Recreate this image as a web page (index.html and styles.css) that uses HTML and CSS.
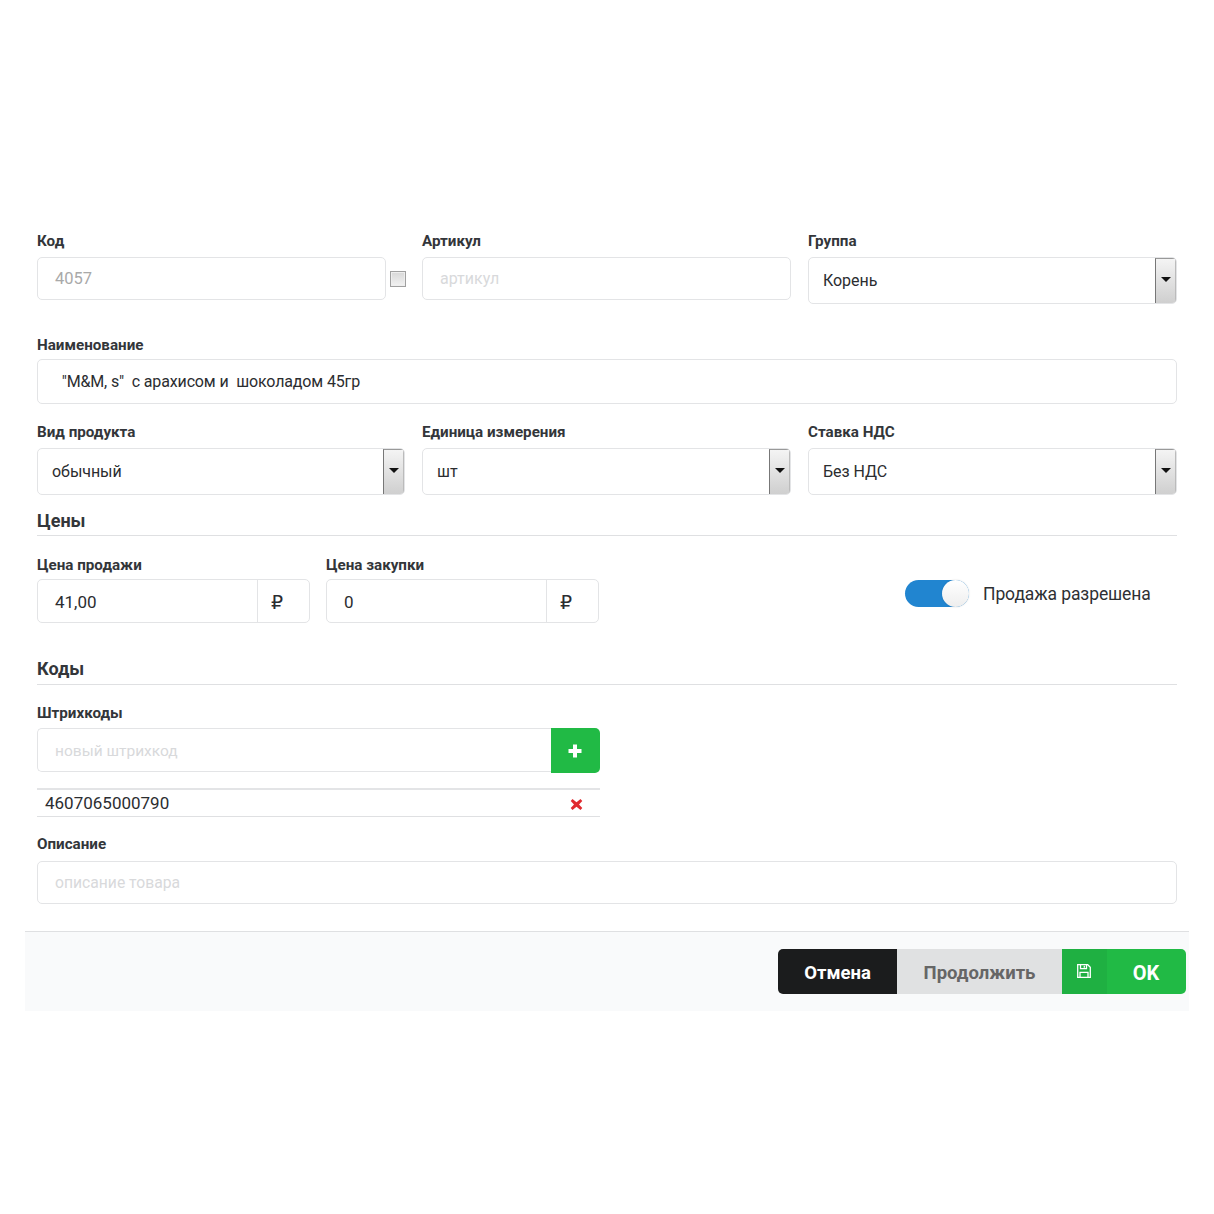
FILE: index.html
```html
<!DOCTYPE html>
<html lang="ru">
<head>
<meta charset="utf-8">
<title>Товар</title>
<link rel="stylesheet" href="styles.css">
</head>
<body>
<div class="modal">
  <form class="form">
    <div class="row three row-1">
      <div class="field">
        <label class="label">Код</label>
        <div class="code-line">
          <div class="input code-input muted">4057</div>
          <span class="check"></span>
        </div>
      </div>
      <div class="field">
        <label class="label">Артикул</label>
        <div class="input code-h placeholder">артикул</div>
      </div>
      <div class="field">
        <label class="label">Группа</label>
        <div class="select"><span class="select-text">Корень</span><span class="arrow"></span></div>
      </div>
    </div>

    <div class="field name-field">
      <label class="label">Наименование</label>
      <div class="input name-input">&nbsp;&nbsp;"M&amp;M, s"&nbsp; с арахисом и&nbsp; шоколадом 45гр</div>
    </div>

    <div class="row three row-3">
      <div class="field">
        <label class="label">Вид продукта</label>
        <div class="select"><span class="select-text">обычный</span><span class="arrow"></span></div>
      </div>
      <div class="field">
        <label class="label">Единица измерения</label>
        <div class="select"><span class="select-text">шт</span><span class="arrow"></span></div>
      </div>
      <div class="field">
        <label class="label">Ставка НДС</label>
        <div class="select"><span class="select-text">Без НДС</span><span class="arrow"></span></div>
      </div>
    </div>

    <h3 class="section section-prices">Цены</h3>
    <div class="prices">
      <div class="field price-sale">
        <label class="label">Цена продажи</label>
        <div class="group">
          <div class="group-input">41,00</div>
          <div class="addon">₽</div>
        </div>
      </div>
      <div class="field price-buy">
        <label class="label">Цена закупки</label>
        <div class="group">
          <div class="group-input">0</div>
          <div class="addon">₽</div>
        </div>
      </div>
      <div class="switch-line">
        <span class="switch"><span class="knob"></span></span>
        <span class="switch-text">Продажа разрешена</span>
      </div>
    </div>

    <h3 class="section section-codes">Коды</h3>
    <div class="barcodes">
      <label class="label">Штрихкоды</label>
      <div class="barcode-add">
        <div class="barcode-input placeholder">новый штрихкод</div>
        <button type="button" class="plus">
          <svg width="16" height="16" viewBox="0 0 16 16"><path d="M6 1.500h4V6h4.500v4H10v4.500H6V10H1.500V6H6z" fill="#fff"/></svg>
        </button>
      </div>
      <div class="barcode-item">
        <span>4607065000790</span>
        <svg class="remove" width="13" height="13" viewBox="0 0 13 13"><path d="M2.500 1 6.500 4.300 10.500 1 12.300 3 9 6.500 12.300 10 10.500 12 6.500 8.700 2.500 12 .7 10 4 6.500 .7 3z" fill="#e02a2f"/></svg>
      </div>
    </div>

    <div class="field desc-field">
      <label class="label">Описание</label>
      <div class="input desc-input placeholder">описание товара</div>
    </div>
  </form>

  <footer class="footer">
    <button type="button" class="btn btn-cancel">Отмена</button>
    <button type="button" class="btn btn-continue">Продолжить</button>
    <div class="btn-ok">
      <span class="ok-icon">
        <svg width="16" height="16" viewBox="0 0 16 16" fill="none" stroke="#fff" stroke-width="1.300"><path d="M1.700 1.700h10l2.600 2.600v10H1.700z"/><path d="M4.500 1.700v4h6v-4M8.300 2.800v1.900M4 14.300V9.300h8v5"/></svg>
      </span>
      <span class="ok-text">OK</span>
    </div>
  </footer>
</div>
</body>
</html>
```

FILE: styles.css
```css
* { box-sizing: border-box; }
html, body { margin: 0; padding: 0; background: #fff; }
body {
  height: 1214px;
  font-family: Roboto, "Noto Sans", sans-serif;
  color: #2b2d30;
  font-size: 16.500px;
  padding: 231px 25px 0;
}
.modal { width: 1164px; }
.form { padding: 0 12px; height: 700px; }
.row { display: grid; }
.three { grid-template-columns: 368px 369px 369px; column-gap: 17px; }
.row-1 { height: 104px; }
.row-3 { height: 85px; }
.row-3 .label { margin-bottom: 6px; line-height: 18px; }
.field { display: flex; flex-direction: column; }
.label {
  display: block;
  font-size: 15.200px;
  font-weight: 700;
  color: #33363a;
  line-height: 20px;
  height: 19px;
  margin-bottom: 7px;
}
.input, .group, .barcode-input, .select {
  background: #fff;
  border: 1.500px solid #e3e4e6;
  border-radius: 5px;
}
.input { display: flex; align-items: center; padding: 0 17px; white-space: pre; }
.code-line { display: flex; align-items: center; gap: 4px; }
.code-input { flex: none; width: 349px; height: 43px; }
.code-h { height: 43px; font-size: 16px; }
.muted { color: #a9a9a9; }
.placeholder { color: #d8d9db; }
.check {
  flex: none;
  width: 16px;
  height: 16px;
  border: 1px solid #a0a0a0;
  background: linear-gradient(#d8d8d8, #f2f2f2);
  box-shadow: inset 0 0 0 1px #eee;
}
.select {
  height: 46.500px;
  display: flex;
  align-items: center;
  justify-content: space-between;
  padding-left: 14px;
  overflow: hidden;
  font-size: 16px;
  letter-spacing: -0.05px;
}
.arrow {
  align-self: stretch;
  width: 21px;
  position: relative;
  background: linear-gradient(#f4f4f4, #cfcfcf);
  border-left: 1.500px solid #777;
  border-top: 1px solid #999;
  border-right: 1px solid #bbb;
}
.arrow::after {
  content: "";
  position: absolute;
  left: 4.500px;
  top: 18px;
  border-left: 5px solid transparent;
  border-right: 5px solid transparent;
  border-top: 5px solid #111;
}
.name-field { height: 88px; }
.name-field .label { margin-bottom: 5px; }
.name-input { height: 45px; padding: 0 16px; font-size: 16px; letter-spacing: -0.14px; }
.section {
  margin: 0;
  font-size: 18px;
  font-weight: 700;
  color: #33363a;
  line-height: 26px;
  height: 28px;
  border-bottom: 1.500px solid #dfe0e2;
}
.section-codes { line-height: 24px; }
.prices { display: flex; height: 121px; padding-top: 18.500px; align-items: flex-start; }
.price-sale { width: 273px; margin-right: 16px; }
.price-buy { width: 273px; }
.prices .label { margin-bottom: 5px; }
.group { display: flex; height: 44.500px; }
.group-input { flex: 1; display: flex; align-items: center; padding: 3px 17px 0; font-size: 17px; }
.addon {
  width: 52px;
  display: flex;
  align-items: center;
  padding: 2px 0 0 13px;
  border-left: 1.500px solid #e3e4e6;
  font-family: "DejaVu Sans", sans-serif;
  font-size: 19px;
}
.switch-line { display: flex; align-items: center; margin-left: 306px; margin-top: 24px; height: 30px; }
.switch {
  width: 64px;
  height: 27px;
  border-radius: 14px;
  background: #2185d0;
  position: relative;
  margin-right: 14px;
}
.knob {
  position: absolute;
  right: 0;
  top: 0;
  width: 27px;
  height: 27px;
  border-radius: 50%;
  background: linear-gradient(#fff, #eee);
  box-shadow: 0 0 2px rgba(0,0,0,.15);
}
.switch-text { font-size: 17.500px; color: #2e3033; letter-spacing: -0.1px; }
.barcodes { padding-top: 18px; width: 563px; }
.barcodes .label { margin-bottom: 6px; }
.barcode-add { display: flex; height: 45px; }
.barcode-input {
  flex: 1;
  height: 44px;
  display: flex;
  align-items: center;
  padding: 1px 17px 0;
  border-right: 0;
  border-radius: 5px 0 0 5px;
  font-size: 15.500px;
}
.plus {
  width: 49px;
  height: 45px;
  padding: 0 2px 0 0;
  border: 0;
  border-radius: 0 5px 5px 0;
  background: #21ba45;
  display: flex;
  align-items: center;
  justify-content: center;
}
.barcode-item {
  margin-top: 15px;
  height: 29px;
  border-top: 2px solid #e3e4e6;
  border-bottom: 1.500px solid #dfe0e2;
  display: flex;
  align-items: center;
  justify-content: space-between;
  padding: 0 17px 0 8px;
  font-size: 17px;
}
.remove { margin-top: 2px; }
.desc-field { padding-top: 18px; }
.desc-field .label { margin-bottom: 7px; line-height: 18px; }
.desc-input { height: 43px; font-size: 15.700px; }
.footer {
  background: #f9fafb;
  border-top: 1.500px solid #dfe0e2;
  height: 80px;
  display: flex;
  justify-content: flex-end;
  align-items: flex-start;
  padding: 17px 3px 0 0;
}
.btn {
  height: 45px;
  border: 0;
  padding: 3px 0 0;
  font-family: inherit;
  font-size: 18.500px;
  font-weight: 700;
}
.btn-cancel { width: 119px; background: #1b1c1d; color: #fff; border-radius: 5px 0 0 5px; }
.btn-continue { width: 165px; background: #e0e1e2; color: #666; }
.btn-ok {
  width: 124px;
  height: 45px;
  display: flex;
  background: #21ba45;
  color: #fff;
  border-radius: 0 5px 5px 0;
  font-weight: 700;
  font-size: 20px;
  overflow: hidden;
}
.ok-icon {
  width: 45px;
  background: #1fb042;
  display: flex;
  align-items: center;
  justify-content: center;
  padding: 0 2px 2px 0;
}
.ok-text { flex: 1; display: flex; align-items: center; justify-content: center; padding: 3px 1px 0 0; }
```
